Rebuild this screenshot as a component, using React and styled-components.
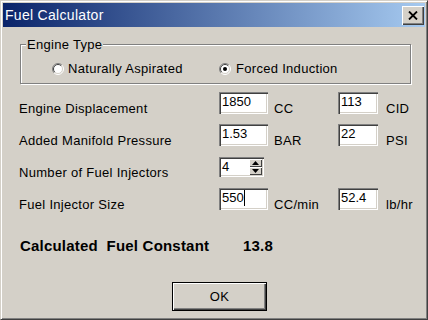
import styled, { createGlobalStyle } from "styled-components";

const GlobalStyle = createGlobalStyle`
    html, body {
        margin: 0;
        padding: 0;
        background: #d4d0c8;
    }
    body {
        font-family: "Liberation Sans", Arial, sans-serif;
        font-size: 13px;
        letter-spacing: 0.3px;
        color: #000000;
    }
`;

const Window = styled.div`
    width: 428px;
    height: 320px;
    box-sizing: border-box;
    padding: 2px;
    background: #d4d0c8;
    border: 1px solid;
    border-color: #d4d0c8 #404040 #404040 #d4d0c8;
    box-shadow: inset 1px 1px #ffffff, inset -1px -1px #808080;
    display: flex;
    flex-direction: column;
`;

const TitleBar = styled.div`
    height: 24px;
    display: flex;
    align-items: center;
    justify-content: space-between;
    padding: 0 1px 0 2px;
    background: linear-gradient(to right, #0a246a, #a6caf0);
    color: #ffffff;
    font-size: 14px;
`;

const CloseButton = styled.div`
    width: 22px;
    height: 19px;
    box-sizing: border-box;
    display: flex;
    align-items: center;
    justify-content: center;
    background: #d4d0c8;
    box-shadow: inset 1px 1px #ffffff, inset -1px -1px #404040, inset -2px -2px #808080;
`;

const Body = styled.div`
    flex: 1;
    display: flex;
    flex-direction: column;
    align-items: flex-start;
    padding: 10px 0 0 16px;
`;

const GroupBox = styled.fieldset`
    margin: 0 0 0 1px;
    padding: 0 0 7px 0;
    width: 391px;
    box-sizing: border-box;
    border: 1px solid #808080;
    box-shadow: inset 1px 1px #ffffff, 1px 1px #ffffff;
`;

const Legend = styled.legend`
    margin-left: 5px;
    padding: 0 1px;
    line-height: 15px;
    background: #d4d0c8;
`;

const RadioRow = styled.div`
    display: grid;
    grid-template-columns: 167px auto;
    margin: 9px 0 0 31px;
`;

const RadioItem = styled.label`
    display: flex;
    align-items: center;
    gap: ${({ $gap }) => $gap}px;
    line-height: 15px;
`;

const FormGrid = styled.div`
    display: grid;
    grid-template-columns: 200px 49px 70px 40px auto;
    row-gap: 8px;
    margin-top: 8px;
    align-items: start;
`;

const FieldLabel = styled.div`
    margin-top: 9px;
    line-height: 15px;
    padding-left: ${({ $indent }) => $indent || 0}px;
    white-space: nowrap;
`;

const TextBox = styled.div`
    height: 22px;
    box-sizing: border-box;
    padding: 2px 3px 0;
    line-height: 15px;
    letter-spacing: 0;
    background: #ffffff;
    box-shadow: inset 1px 1px #808080, inset 2px 2px #404040,
        inset -1px -1px #ffffff, inset -2px -2px #d4d0c8;
    display: flex;
    align-items: flex-start;
`;

const Caret = styled.span`
    display: inline-block;
    width: 1px;
    height: 16px;
    background: #000000;
`;

const SpinBox = styled(TextBox)`
    width: 45px;
    height: 20px;
    margin-top: 1px;
    padding: 2px 2px 0 3px;
    justify-content: space-between;
`;

const SpinButtons = styled.div`
    display: flex;
    flex-direction: column;
    width: 13px;
    height: 16px;
`;

const SpinButton = styled.div`
    flex: 1;
    display: flex;
    align-items: center;
    justify-content: center;
    background: #d4d0c8;
    box-shadow: inset 1px 1px #ffffff, inset -1px -1px #404040;
`;

const CalcRow = styled.div`
    display: flex;
    margin: 25px 0 0 1px;
    font-size: 15px;
    font-weight: bold;
    line-height: 18px;
    letter-spacing: 0.2px;
`;

const CalcLabel = styled.div`
    width: 223px;
    white-space: pre;
`;

const OkButton = styled.div`
    margin: 27px 0 0 153px;
    width: 95px;
    height: 29px;
    box-sizing: border-box;
    border: 1px solid #000000;
    display: flex;
    align-items: center;
    justify-content: center;
    background: #d4d0c8;
    box-shadow: inset 1px 1px #ffffff, inset -1px -1px #404040, inset -2px -2px #808080;
`;

const CloseIcon = () => (
    <svg width="10" height="9" viewBox="0 0 10 9">
        <path d="M1 0.5 L9 8.5 M9 0.5 L1 8.5" stroke="#000" strokeWidth="1.8" />
    </svg>
);

const RadioIcon = ({ checked }) => (
    <svg width="12" height="12" viewBox="0 0 12 12">
        <circle cx="6" cy="6" r="5" fill="#ffffff" />
        <path d="M2.1 9.9 A5.5 5.5 0 0 1 9.9 2.1" fill="none" stroke="#808080" />
        <path d="M9.9 2.1 A5.5 5.5 0 0 1 2.1 9.9" fill="none" stroke="#ffffff" />
        <path d="M2.8 9.2 A4.5 4.5 0 0 1 9.2 2.8" fill="none" stroke="#404040" />
        <path d="M9.2 2.8 A4.5 4.5 0 0 1 2.8 9.2" fill="none" stroke="#d4d0c8" />
        {checked && <circle cx="6" cy="6" r="2" fill="#000000" />}
    </svg>
);

const Arrow = ({ up }) => (
    <svg width="7" height="4" viewBox="0 0 7 4">
        <path d={up ? "M3.5 0 L7 4 L0 4 Z" : "M0 0 L7 0 L3.5 4 Z"} fill="#000" />
    </svg>
);

export default function App() {
    return (
        <>
            <GlobalStyle />
            <Window>
                <TitleBar>
                    <span>Fuel Calculator</span>
                    <CloseButton>
                        <CloseIcon />
                    </CloseButton>
                </TitleBar>
                <Body>
                    <GroupBox>
                        <Legend>Engine Type</Legend>
                        <RadioRow>
                            <RadioItem $gap={4}>
                                <RadioIcon />
                                Naturally Aspirated
                            </RadioItem>
                            <RadioItem $gap={5}>
                                <RadioIcon checked />
                                Forced Induction
                            </RadioItem>
                        </RadioRow>
                    </GroupBox>

                    <FormGrid>
                        <FieldLabel>Engine Displacement</FieldLabel>
                        <TextBox>1850</TextBox>
                        <FieldLabel $indent={6}>CC</FieldLabel>
                        <TextBox>113</TextBox>
                        <FieldLabel $indent={8}>CID</FieldLabel>

                        <FieldLabel>Added Manifold Pressure</FieldLabel>
                        <TextBox>1.53</TextBox>
                        <FieldLabel $indent={6}>BAR</FieldLabel>
                        <TextBox>22</TextBox>
                        <FieldLabel $indent={8}>PSI</FieldLabel>

                        <FieldLabel>Number of Fuel Injectors</FieldLabel>
                        <SpinBox>
                            4
                            <SpinButtons>
                                <SpinButton>
                                    <Arrow up />
                                </SpinButton>
                                <SpinButton>
                                    <Arrow />
                                </SpinButton>
                            </SpinButtons>
                        </SpinBox>
                        <div />
                        <div />
                        <div />

                        <FieldLabel>Fuel Injector Size</FieldLabel>
                        <TextBox>
                            550
                            <Caret />
                        </TextBox>
                        <FieldLabel $indent={6}>CC/min</FieldLabel>
                        <TextBox>52.4</TextBox>
                        <FieldLabel $indent={8}>lb/hr</FieldLabel>
                    </FormGrid>

                    <CalcRow>
                        <CalcLabel>Calculated  Fuel Constant</CalcLabel>
                        <span>13.8</span>
                    </CalcRow>

                    <OkButton>OK</OkButton>
                </Body>
            </Window>
        </>
    );
}
